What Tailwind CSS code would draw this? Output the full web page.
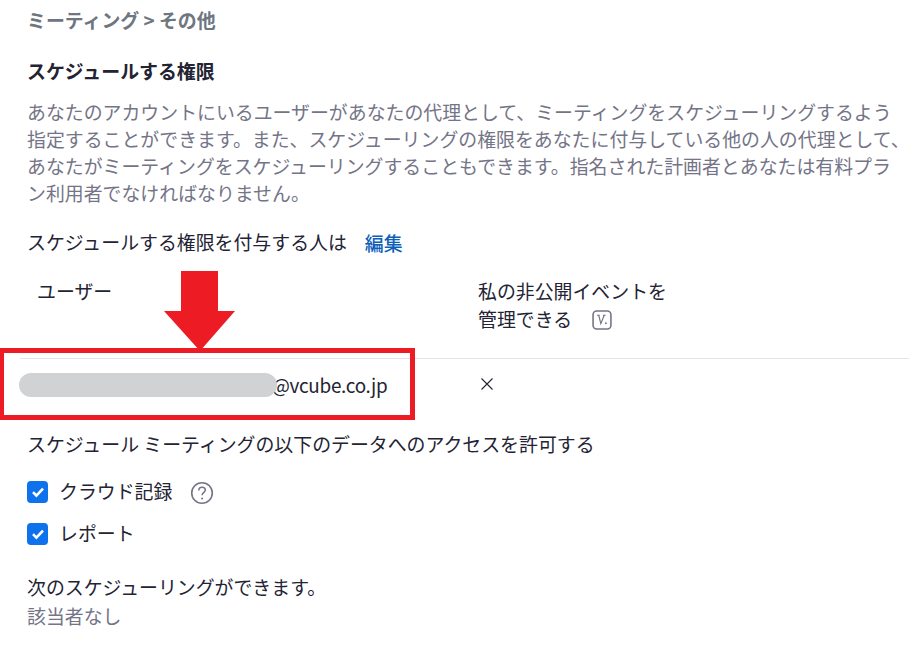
<!DOCTYPE html>
<html lang="ja">
<head>
  <meta charset="UTF-8" />
  <title>スケジュールする権限</title>
  <script src="https://cdn.jsdelivr.net/npm/@tailwindcss/browser@4"></script>
</head>
<body class="bg-white overflow-hidden font-['Noto_Sans_CJK_JP','Noto_Sans',sans-serif] text-[18.9px] leading-[26.7px] text-[#232333]">
  <div class="relative w-[913px] h-[645px] overflow-hidden">
    <main class="pl-[27px] pt-[7px]">
      <h1 class="font-bold text-[#6e7680]">ミーティング &gt; その他</h1>

      <h2 class="mt-[24px] font-bold">スケジュールする権限</h2>
      <p class="mt-[15px] whitespace-nowrap text-[#747487]">あなたのアカウントにいるユーザーがあなたの代理として、ミーティングをスケジューリングするよう<br>指定することができます。また、スケジューリングの権限をあなたに付与している他の人の代理として、<br>あなたがミーティングをスケジューリングすることもできます。指名された計画者とあなたは有料プラ<br>ン利用者でなければなりません。</p>

      <div class="mt-[23px] flex">
        <span>スケジュールする権限を付与する人は</span>
        <a class="ml-[18px] mt-[1px] text-[#0e5fb8] font-medium">編集</a>
      </div>

      <section class="mt-[19px] ml-[-7px] w-[889px]">
        <div class="flex h-[83px] border-b border-[#e4e4ed] pl-[17px]">
          <div class="w-[441px] pt-[2px]">ユーザー</div>
          <div class="pt-[2px]">
            <div>私の非公開イベントを</div>
            <div class="flex items-center pt-[1px]">
              <span>管理できる</span>
              <svg class="ml-[20px] mt-[3px]" width="20" height="20" viewBox="0 0 19 19" fill="none">
                <rect x="1" y="1" width="17" height="17" rx="3.5" stroke="#747487" stroke-width="1.5"/>
                <path d="M4.8 5h1.6l2 8 3.2-8M5.6 5h1.8M10.4 5h2.6" stroke="#747487" stroke-width="1.1"/>
                <circle cx="13.2" cy="12.6" r="0.9" fill="#747487"/>
              </svg>
            </div>
          </div>
        </div>
        <div class="flex h-[52px] items-center">
          <div class="w-[458px] pl-[252px] tracking-[-0.3px]">@vcube.co.jp</div>
          <svg class="ml-[2px] mb-[2px]" width="14" height="14" viewBox="0 0 14 14" fill="none">
            <path d="M1.5 1.5l11 11M12.5 1.5l-11 11" stroke="#232333" stroke-width="1.1"/>
          </svg>
        </div>
      </section>

      <p class="mt-[20px]">スケジュール ミーティングの以下のデータへのアクセスを許可する</p>

      <div class="mt-[21px] flex items-center h-[26px]">
        <span class="flex h-[22px] w-[21px] items-center justify-center rounded-[4px] bg-[#0e72ed]">
          <svg width="14" height="12" viewBox="0 0 14 12" fill="none"><path d="M2 6.2l3.4 3.4L12 2.6" stroke="#fff" stroke-width="2.6"/></svg>
        </span>
        <span class="ml-[11px]">クラウド記録</span>
        <svg class="ml-[18px] mt-[2px]" width="24" height="24" viewBox="0 0 24 24" fill="none">
          <circle cx="12" cy="12" r="10.3" stroke="#747487" stroke-width="1.6"/>
          <path d="M8.8 9.4c0-2 1.5-3.2 3.3-3.2s3.2 1.2 3.2 2.9c0 2.6-3.2 2.6-3.2 5.2" stroke="#747487" stroke-width="1.5"/>
          <circle cx="12.1" cy="17.4" r="1" fill="#747487"/>
        </svg>
      </div>
      <div class="mt-[16px] flex items-center h-[26px]">
        <span class="flex h-[22px] w-[21px] items-center justify-center rounded-[4px] bg-[#0e72ed]">
          <svg width="14" height="12" viewBox="0 0 14 12" fill="none"><path d="M2 6.2l3.4 3.4L12 2.6" stroke="#fff" stroke-width="2.6"/></svg>
        </span>
        <span class="ml-[11px]">レポート</span>
      </div>

      <p class="mt-[27px]">次のスケジューリングができます。</p>
      <p class="mt-[3px] text-[#747487]">該当者なし</p>
    </main>

    <!-- annotation overlays -->
    <div class="absolute left-[19px] top-[373px] h-[24px] w-[258px] rounded-[12px] bg-[#d1d2d4]"></div>
    <div class="absolute left-[-1px] top-[348px] h-[72px] w-[416px] border-[5px] border-[#ed1c24]"></div>
    <svg class="absolute left-[164px] top-[271px]" width="72" height="80" viewBox="0 0 72 80">
      <path d="M17 0h37v40h17L36 80 0 40h17z" fill="#ed1c24"/>
    </svg>
  </div>
</body>
</html>
